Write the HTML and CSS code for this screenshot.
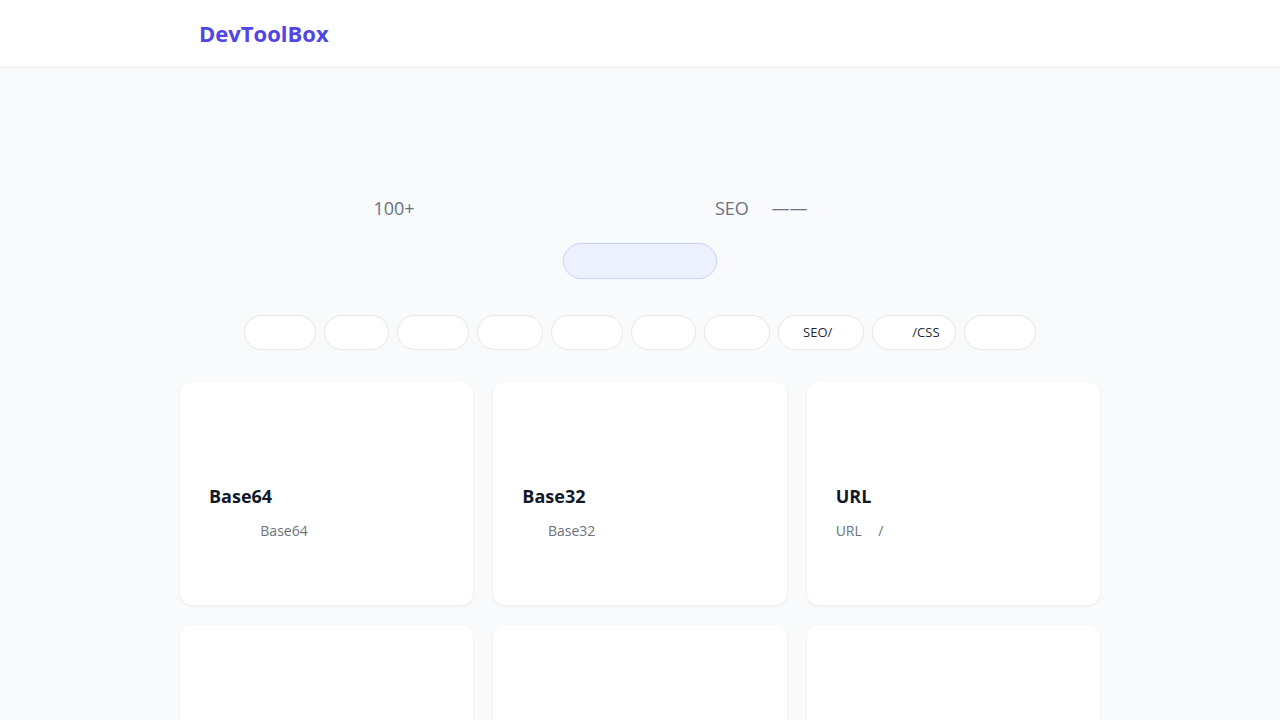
FILE: index.html
```html
<!DOCTYPE html>
<html>
  <head>
    <meta charset="utf-8">
    <link rel="stylesheet" href="styles.css">
  </head>
  <body>
    <div class="header">
      <div class="header-inner">
        <div class="logo">DevToolBox</div>
      </div>
    </div>

    <div class="main">
      <div class="hero">
        <h1 class="hero-title">&emsp;&emsp;&emsp;&emsp;&emsp;&emsp;</h1>
        <p class="hero-sub">100+ &emsp;&emsp;&emsp;&emsp;&emsp;&emsp;&emsp;&emsp;&emsp;&emsp;&emsp;&emsp;&emsp;&emsp;&emsp;&emsp;&thinsp; SEO &emsp;——&emsp;&emsp;&emsp;&emsp;&emsp;&ensp;</p>
        <div class="hero-badge">&emsp;&emsp;&emsp;&emsp;&emsp;&emsp;&emsp;&emsp;</div>
      </div>

      <div class="filters">
        <button class="pill">&emsp;&emsp;&emsp;</button>
        <button class="pill">&emsp;&emsp;&ensp;</button>
        <button class="pill">&emsp;&emsp;&emsp;</button>
        <button class="pill">&emsp;&emsp;&ensp;</button>
        <button class="pill">&emsp;&emsp;&emsp;</button>
        <button class="pill">&emsp;&emsp;&ensp;</button>
        <button class="pill">&emsp;&emsp;&ensp;</button>
        <button class="pill">&ensp;&thinsp;SEO/&emsp;&thinsp;</button>
        <button class="pill">&emsp;&ensp;&thinsp;&thinsp;/CSS</button>
        <button class="pill">&emsp;&emsp;&emsp;</button>
      </div>

      <div class="tool-grid">
        <div class="tool-card">
          <div class="tool-icon"></div>
          <div class="tool-name">Base64</div>
          <div class="tool-desc">&emsp;&emsp;&emsp;&ensp;&thinsp;Base64</div>
        </div>
        <div class="tool-card">
          <div class="tool-icon"></div>
          <div class="tool-name">Base32</div>
          <div class="tool-desc">&emsp;&ensp;&thinsp;&thinsp;Base32</div>
        </div>
        <div class="tool-card">
          <div class="tool-icon"></div>
          <div class="tool-name">URL</div>
          <div class="tool-desc">URL&emsp;&thinsp;/</div>
        </div>
        <div class="tool-card">
          <div class="tool-icon"></div>
        </div>
        <div class="tool-card">
          <div class="tool-icon"></div>
        </div>
        <div class="tool-card">
          <div class="tool-icon"></div>
        </div>
      </div>
    </div>
  </body>
</html>
```

FILE: styles.css
```css
body {
  font-family: "Open Sans", "Noto Sans", sans-serif;
  margin: 0;
  padding: 0;
  background-color: #f9fafb;
  color: #111827;
}
.header {
  background-color: white;
  border-bottom: 1px solid #e5e7eb;
  height: 67px;
  display: flex;
  align-items: center;
}
.header-inner {
  width: 882px;
  margin: 0 auto;
}
.logo {
  font-size: 22px;
  font-weight: 700;
  color: #4f46e5;
  line-height: 1.5;
}
.main {
  width: 920px;
  margin: 0 auto;
}
.hero {
  padding-top: 62px;
  text-align: center;
}
.hero-title {
  font-size: 40px;
  line-height: 48px;
  margin: 0 0 16px 0;
  font-weight: 700;
}
.hero-sub {
  font-size: 18px;
  line-height: 28px;
  color: #6b7280;
  margin: 0;
}
.hero-badge {
  display: inline-block;
  margin-top: 21px;
  padding: 8px 20px;
  font-size: 14px;
  line-height: 18px;
  background-color: #eef2ff;
  border: 1px solid #c7d2fe;
  border-radius: 999px;
  color: #4f46e5;
}
.filters {
  display: flex;
  justify-content: center;
  gap: 8px;
  margin-top: 36px;
}
.pill {
  font-family: inherit;
  font-size: 13px;
  line-height: 17px;
  padding: 8px 15.5px;
  background-color: white;
  border: 1px solid #e5e7eb;
  border-radius: 999px;
  color: #1f2937;
  cursor: pointer;
}
.tool-grid {
  display: grid;
  grid-template-columns: repeat(3, 1fr);
  gap: 20px;
  margin-top: 32px;
}
.tool-card {
  box-sizing: border-box;
  min-height: 223px;
  background-color: white;
  border-radius: 12px;
  box-shadow: 0 1px 3px rgba(0, 0, 0, 0.08);
  padding: 28px 28px 28px 29px;
}
.tool-icon {
  height: 48px;
  margin-bottom: 24px;
}
.tool-name {
  font-size: 18px;
  font-weight: 700;
  line-height: 28px;
  color: #111827;
}
.tool-desc {
  font-size: 14px;
  line-height: 22px;
  color: #6b7280;
  margin-top: 10px;
}
```
